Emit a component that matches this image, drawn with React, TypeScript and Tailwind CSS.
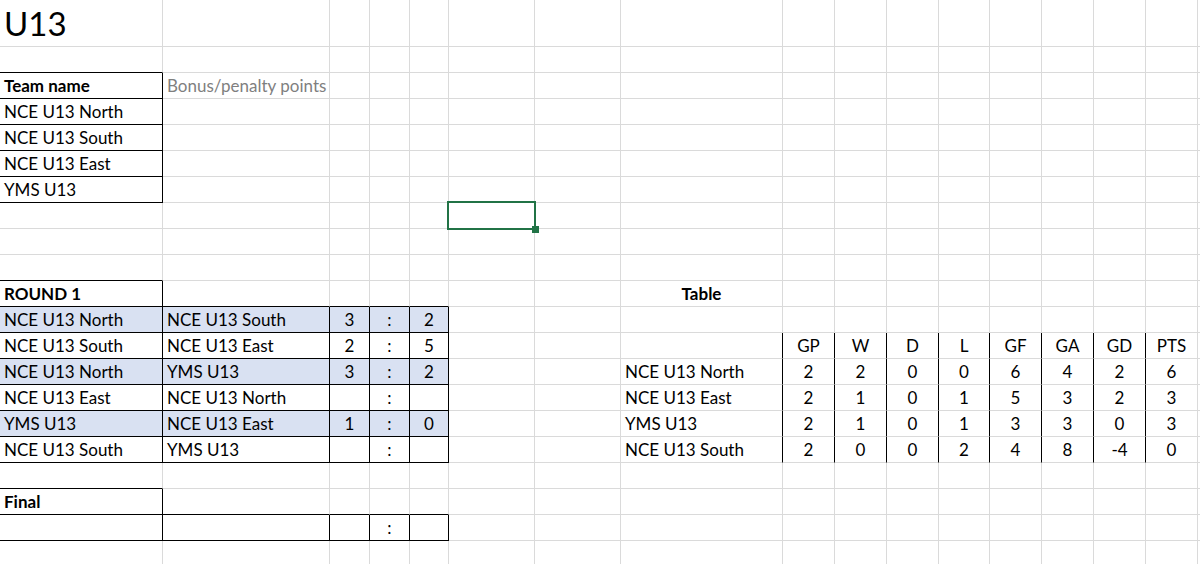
import React from "react";

type Cell = { t: string; bold?: boolean; center?: boolean; blue?: boolean; gray?: boolean; big?: boolean };

const ROWS = 21;
const COLS = 17;

// match rows: [home, away, homeScore, awayScore]
const matches = [
    ["NCE U13 North", "NCE U13 South", "3", "2"],
    ["NCE U13 South", "NCE U13 East", "2", "5"],
    ["NCE U13 North", "YMS U13", "3", "2"],
    ["NCE U13 East", "NCE U13 North", "", ""],
    ["YMS U13", "NCE U13 East", "1", "0"],
    ["NCE U13 South", "YMS U13", "", ""],
];

const standings = [
    ["NCE U13 North", "2", "2", "0", "0", "6", "4", "2", "6"],
    ["NCE U13 East", "2", "1", "0", "1", "5", "3", "2", "3"],
    ["YMS U13", "2", "1", "0", "1", "3", "3", "0", "3"],
    ["NCE U13 South", "2", "0", "0", "2", "4", "8", "-4", "0"],
];

function buildSheet() {
    const cells: Record<string, Cell> = {};
    const rightBlack = new Set<string>();
    const bottomBlack = new Set<string>();
    const k = (r: number, c: number) => `${r}-${c}`;

    cells[k(0, 0)] = { t: "U13", big: true };

    // team list
    cells[k(2, 0)] = { t: "Team name", bold: true };
    cells[k(2, 1)] = { t: "Bonus/penalty points", gray: true };
    ["NCE U13 North", "NCE U13 South", "NCE U13 East", "YMS U13"].forEach((t, i) => {
        cells[k(3 + i, 0)] = { t };
    });
    bottomBlack.add(k(1, 0));
    for (let r = 2; r <= 6; r++) {
        rightBlack.add(k(r, 0));
        bottomBlack.add(k(r, 0));
    }

    // round 1
    cells[k(10, 0)] = { t: "ROUND 1", bold: true };
    bottomBlack.add(k(9, 0));
    rightBlack.add(k(10, 0));
    for (let c = 0; c <= 4; c++) bottomBlack.add(k(10, c));
    matches.forEach((m, i) => {
        const r = 11 + i;
        const blue = i % 2 === 0;
        cells[k(r, 0)] = { t: m[0], blue };
        cells[k(r, 1)] = { t: m[1], blue };
        cells[k(r, 2)] = { t: m[2], center: true, blue };
        cells[k(r, 3)] = { t: ":", center: true, blue };
        cells[k(r, 4)] = { t: m[3], center: true, blue };
        for (let c = 0; c <= 4; c++) {
            rightBlack.add(k(r, c));
            bottomBlack.add(k(r, c));
        }
    });

    // final
    cells[k(18, 0)] = { t: "Final", bold: true };
    bottomBlack.add(k(17, 0));
    rightBlack.add(k(18, 0));
    for (let c = 0; c <= 4; c++) {
        bottomBlack.add(k(18, c));
        rightBlack.add(k(19, c));
        bottomBlack.add(k(19, c));
    }
    cells[k(19, 3)] = { t: ":", center: true };

    // standings
    cells[k(10, 7)] = { t: "Table", bold: true, center: true };
    ["GP", "W", "D", "L", "GF", "GA", "GD", "PTS"].forEach((h, i) => {
        cells[k(12, 8 + i)] = { t: h, center: true };
    });
    standings.forEach((row, i) => {
        cells[k(13 + i, 7)] = { t: row[0] };
        row.slice(1).forEach((v, j) => {
            cells[k(13 + i, 8 + j)] = { t: v, center: true };
        });
    });
    for (let r = 12; r <= 16; r++) {
        for (let c = 7; c <= 14; c++) rightBlack.add(k(r, c));
    }

    return { cells, rightBlack, bottomBlack };
}

export default function App() {
    const { cells, rightBlack, bottomBlack } = buildSheet();
    const items: React.ReactNode[] = [];

    for (let r = 0; r < ROWS; r++) {
        for (let c = 0; c < COLS; c++) {
            const key = `${r}-${c}`;
            const cell = cells[key];
            const selected = r === 7 && c === 5;
            const cls = [
                "relative flex items-end whitespace-nowrap border-r border-b",
                rightBlack.has(key) ? "border-r-black" : "border-r-[#dadada]",
                bottomBlack.has(key) ? "border-b-black" : "border-b-[#dadada]",
                cell?.blue ? "bg-[#d9e1f2]" : "bg-white",
                cell?.center ? "justify-center" : "pl-[4px]",
                cell?.big ? "pb-[6px] text-[33px]" : "pb-[4px] text-[17px]",
                cell?.bold ? "font-bold" : "font-normal",
                cell?.gray ? "text-[#7f7f7f]" : "text-black",
            ].join(" ");
            items.push(
                <div key={key} className={cls}>
                    {cell && <span className="leading-none">{cell.t}</span>}
                    {selected && (
                        <div className="absolute -left-[2px] -top-[2px] z-10 h-[29px] w-[89px] border-2 border-[#217346]">
                            <div className="absolute -bottom-[5px] -right-[5px] h-[7px] w-[7px] bg-[#217346]" />
                        </div>
                    )}
                </div>
            );
        }
    }

    return (
        <div className="h-[564px] w-[1200px] overflow-hidden bg-white" style={{ fontFamily: "Lato, 'Open Sans', sans-serif" }}>
            <div className="grid grid-cols-[163px_167px_40px_40px_39px_86px_86px_162px_52px_52px_52px_51px_52px_52px_52px_52px_1fr] grid-rows-[47px_repeat(20,26px)]">
                {items}
            </div>
        </div>
    );
}
